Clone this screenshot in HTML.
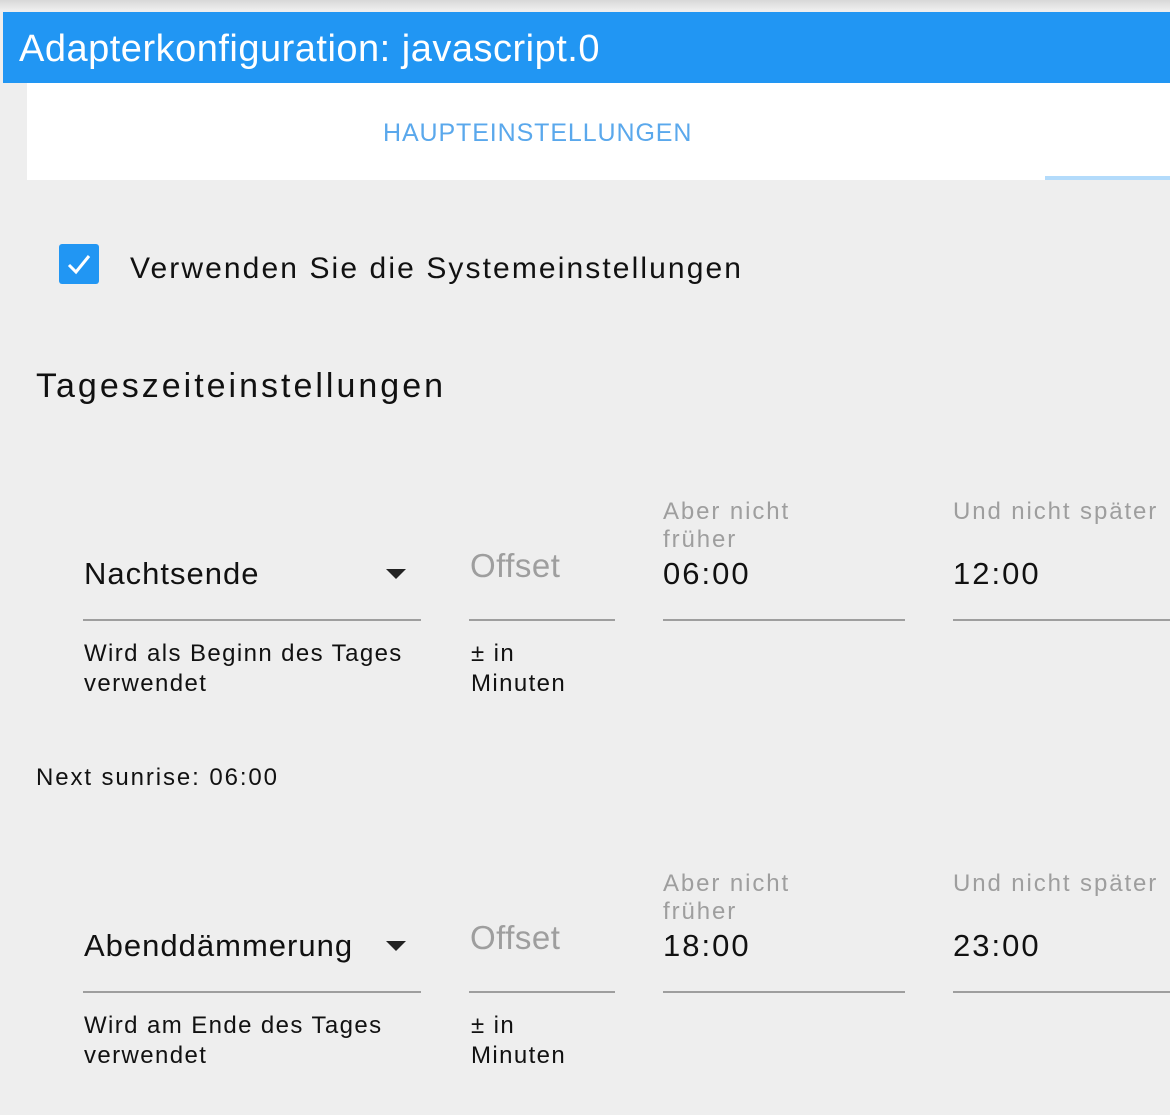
<!DOCTYPE html>
<html><head><meta charset="utf-8"><style>
html,body{margin:0;padding:0;}
body{width:1170px;height:1115px;background:#eeeeee;position:relative;overflow:hidden;font-family:"Liberation Sans",sans-serif;}
.a{position:absolute;line-height:1;white-space:nowrap;}
.ln{position:absolute;height:2px;background:#9e9e9e;}
.lbl{color:#9e9e9e;font-size:24px;letter-spacing:1.9px;}
.val{font-size:31px;color:#111;letter-spacing:1px;}
.help{font-size:24px;letter-spacing:1.4px;color:#111;}
</style></head><body>
<div style="position:absolute;left:0;top:0;width:1170px;height:10px;background:linear-gradient(#d8d8d8,#eeeeee);"></div>
<div style="position:absolute;left:3px;top:12px;width:1167px;height:71px;background:#2196f3;"></div>
<div class="a" style="left:19px;top:30px;font-size:38px;letter-spacing:0.5px;color:#fff;">Adapterkonfiguration: javascript.0</div>
<div style="position:absolute;left:27px;top:83px;width:1143px;height:97px;background:#fff;"></div>
<div class="a" style="left:383px;top:121px;font-size:25px;letter-spacing:0.9px;color:#5aa8ec;">HAUPTEINSTELLUNGEN</div>
<div style="position:absolute;left:1045px;top:176px;width:125px;height:4px;background:#b3dbfb;"></div>

<div style="position:absolute;left:59px;top:244px;width:40px;height:40px;background:#2196f3;border-radius:3px;">
<svg width="40" height="40" viewBox="0 0 40 40"><path d="M10 21 L17 28 L30 12" stroke="#fff" stroke-width="3" fill="none"/></svg></div>
<div class="a" style="left:130px;top:254px;font-size:30px;letter-spacing:2.1px;color:#111;">Verwenden Sie die Systemeinstellungen</div>
<div class="a" style="left:36px;top:369px;font-size:34px;letter-spacing:3px;color:#111;">Tageszeiteinstellungen</div>

<!-- row 1 -->
<div class="a val" style="left:84px;top:558px;">Nachtsende</div>
<svg style="position:absolute;left:386px;top:568px" width="22" height="12"><path d="M0 1 L20 1 L10 11Z" fill="#222"/></svg>
<div class="ln" style="left:83px;top:619px;width:338px;"></div>
<div class="a" style="left:470px;top:549px;font-size:33px;color:#9e9e9e;letter-spacing:0.5px;">Offset</div>
<div class="ln" style="left:469px;top:619px;width:146px;"></div>
<div class="a lbl" style="left:663px;top:500px;">Aber nicht</div>
<div class="a lbl" style="left:663px;top:528px;">früher</div>
<div class="a val" style="left:663px;top:558px;letter-spacing:2px;">06:00</div>
<div class="ln" style="left:663px;top:619px;width:242px;"></div>
<div class="a lbl" style="left:953px;top:500px;">Und nicht später</div>
<div class="a val" style="left:953px;top:558px;letter-spacing:2px;">12:00</div>
<div class="ln" style="left:953px;top:619px;width:217px;"></div>
<div class="a help" style="left:84px;top:642px;">Wird als Beginn des Tages</div>
<div class="a help" style="left:84px;top:672px;">verwendet</div>
<div class="a help" style="left:471px;top:642px;">± in</div>
<div class="a help" style="left:471px;top:672px;">Minuten</div>

<div class="a help" style="left:36px;top:766px;letter-spacing:1.9px;">Next sunrise: 06:00</div>

<!-- row 2 -->
<div class="a val" style="left:84px;top:930px;">Abenddämmerung</div>
<svg style="position:absolute;left:386px;top:940px" width="22" height="12"><path d="M0 1 L20 1 L10 11Z" fill="#222"/></svg>
<div class="ln" style="left:83px;top:991px;width:338px;"></div>
<div class="a" style="left:470px;top:921px;font-size:33px;color:#9e9e9e;letter-spacing:0.5px;">Offset</div>
<div class="ln" style="left:469px;top:991px;width:146px;"></div>
<div class="a lbl" style="left:663px;top:872px;">Aber nicht</div>
<div class="a lbl" style="left:663px;top:900px;">früher</div>
<div class="a val" style="left:663px;top:930px;letter-spacing:2px;">18:00</div>
<div class="ln" style="left:663px;top:991px;width:242px;"></div>
<div class="a lbl" style="left:953px;top:872px;">Und nicht später</div>
<div class="a val" style="left:953px;top:930px;letter-spacing:2px;">23:00</div>
<div class="ln" style="left:953px;top:991px;width:217px;"></div>
<div class="a help" style="left:84px;top:1014px;">Wird am Ende des Tages</div>
<div class="a help" style="left:84px;top:1044px;">verwendet</div>
<div class="a help" style="left:471px;top:1014px;">± in</div>
<div class="a help" style="left:471px;top:1044px;">Minuten</div>
</body></html>
